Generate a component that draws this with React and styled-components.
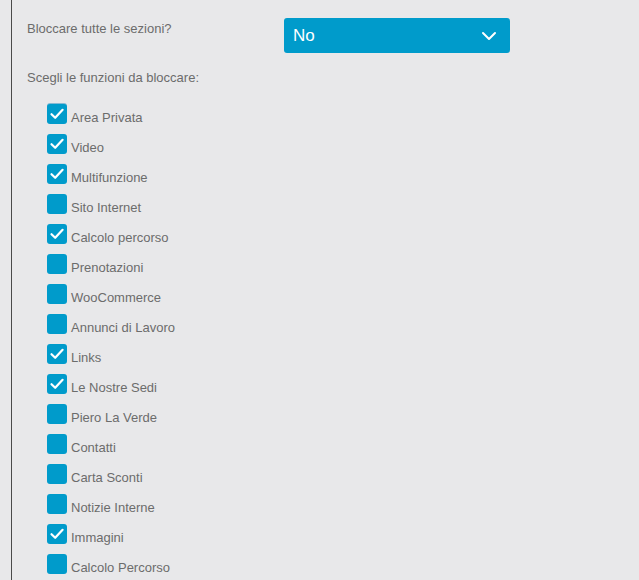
import React, { useState } from "react";
import styled, { createGlobalStyle } from "styled-components";

const GlobalStyle = createGlobalStyle`
  html, body {
    margin: 0;
    padding: 0;
    background: #e8e8ea;
  }
  body {
    font-family: "Liberation Sans", Arial, sans-serif;
  }
`;

const Page = styled.div`
  margin-left: 11px;
  border-left: 1px solid #4a4a4a;
  min-height: 580px;
  padding: 18px 0 0 15px;
  box-sizing: border-box;
`;

const FormRow = styled.div`
  display: flex;
  align-items: flex-start;
`;

const Label = styled.div`
  font-size: 13px;
  line-height: 20px;
  padding-top: 1px;
  color: #6c6c6c;
  width: ${(p) => p.$width || "auto"};
  margin-top: ${(p) => p.$top || "0"};
`;

const Select = styled.div`
  width: 226px;
  height: 35px;
  box-sizing: border-box;
  background: #009bcb;
  border-radius: 3px;
  color: #fff;
  font-size: 17px;
  padding: 1px 13px 0 9px;
  display: flex;
  align-items: center;
  justify-content: space-between;
  cursor: pointer;
`;

const List = styled.div`
  margin-top: 14px;
  padding-left: 20px;
  display: flex;
  flex-direction: column;
`;

const Item = styled.label`
  display: flex;
  align-items: flex-start;
  height: 30px;
  cursor: pointer;
`;

const Box = styled.span`
  width: 20px;
  height: 20px;
  margin-top: 2px;
  margin-right: 4px;
  border-radius: 3px;
  background: #009bcb;
  display: flex;
  align-items: center;
  justify-content: center;
  flex-shrink: 0;
  box-shadow: ${(p) => (p.$focus ? "0 -1px 0 0 #86b9d3" : "none")};
`;

const ItemText = styled.span`
  font-size: 13px;
  line-height: 30px;
  padding-top: 1px;
  color: #6c6c6c;
`;

const items = [
  ["Area Privata", true],
  ["Video", true],
  ["Multifunzione", true],
  ["Sito Internet", false],
  ["Calcolo percorso", true],
  ["Prenotazioni", false],
  ["WooCommerce", false],
  ["Annunci di Lavoro", false],
  ["Links", true],
  ["Le Nostre Sedi", true],
  ["Piero La Verde", false],
  ["Contatti", false],
  ["Carta Sconti", false],
  ["Notizie Interne", false],
  ["Immagini", true],
  ["Calcolo Percorso", false],
];

function Check() {
  return (
    <svg width="20" height="20" viewBox="0 0 20 20" fill="none">
      <path
        d="M4.5 10.2 L8.2 13.8 L15.6 5.8"
        stroke="#fff"
        strokeWidth="2.2"
        strokeLinecap="round"
        strokeLinejoin="round"
      />
    </svg>
  );
}

export default function App() {
  const [checked, setChecked] = useState(items.map(([, c]) => c));
  const toggle = (i) =>
    setChecked((prev) => prev.map((v, j) => (j === i ? !v : v)));

  return (
    <>
      <GlobalStyle />
      <Page>
        <FormRow>
          <Label $width="257px">Bloccare tutte le sezioni?</Label>
          <Select>
            <span>No</span>
            <svg width="16" height="10" viewBox="0 0 16 10" fill="none">
              <path
                d="M2 2 L8 8 L14 2"
                stroke="#fff"
                strokeWidth="2"
                strokeLinecap="round"
                strokeLinejoin="round"
              />
            </svg>
          </Select>
        </FormRow>
        <Label $top="14px">Scegli le funzioni da bloccare:</Label>
        <List>
          {items.map(([name], i) => (
            <Item key={name + i} onClick={() => toggle(i)}>
              <Box $focus={i === 0}>{checked[i] && <Check />}</Box>
              <ItemText>{name}</ItemText>
            </Item>
          ))}
        </List>
      </Page>
    </>
  );
}
